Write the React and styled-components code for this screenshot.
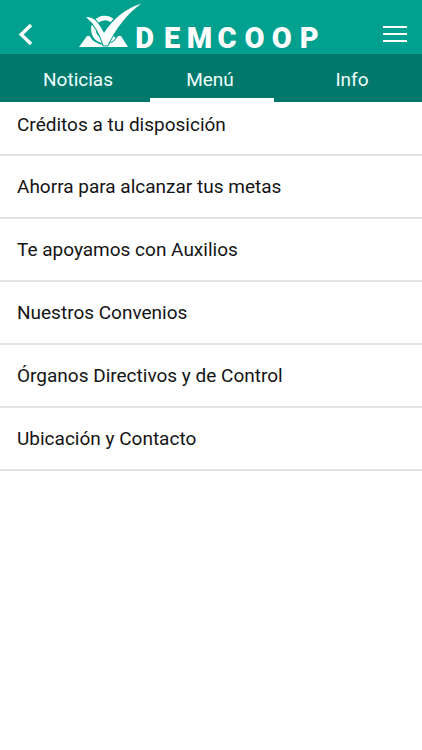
import React, { useState } from 'react';
import styled, { createGlobalStyle } from 'styled-components';

const GlobalStyle = createGlobalStyle`
  * {
    box-sizing: border-box;
  }

  body {
    margin: 0;
    background: #ffffff;
    font-family: Roboto, sans-serif;
    color: #141414;
  }
`;
const Header = styled.header`
  display: flex;
  align-items: center;
  justify-content: space-between;
  height: 54px;
  padding: 0 15px 0 18px;
  background: #02a08f;
`;
const IconButton = styled.button`
  display: flex;
  padding: 14px 0 0;
  border: 0;
  background: none;
  color: #ffffff;
  cursor: pointer;
`;
const Brand = styled.div`
  display: flex;
  align-items: flex-end;
  flex: 1;
  height: 48px;
  padding-left: 45px;
`;
const Wordmark = styled.div`
  display: grid;
  grid-template-columns: repeat(7, 1fr);
  width: 192px;
  margin-left: -11px;
  font-weight: 900;
  font-size: 29px;
  line-height: 26px;
  text-align: center;
  color: #ffffff;
`;
const Tabs = styled.nav`
  display: grid;
  grid-template-columns: 150fr 124fr 148fr;
  height: 48px;
  background: #01786c;
`;
const Tab = styled.button`
  padding: ${({ $pad }) => $pad};
  border: 0;
  border-bottom: 4px solid ${({ $active }) => ($active ? '#ffffff' : 'transparent')};
  background: none;
  font-family: inherit;
  font-size: 19px;
  line-height: 24px;
  color: #f0fffd;
  cursor: pointer;
`;
const List = styled.ul`
  margin: 0;
  padding: 0;
  list-style: none;
`;
const ItemLink = styled.a`
  display: block;
  padding: 19px 17px 18px;
  font-size: 19px;
  line-height: 24px;
  color: inherit;
  text-decoration: none;
`;
const Item = styled.li`
  border-bottom: 2px solid #e2e2e2;

  &:first-child ${ItemLink} {
    padding-top: 11px;
    padding-bottom: 17px;
  }
`;

const tabs = [
  { label: 'Noticias', pad: '8px 0 0 6px' },
  { label: 'Menú', pad: '8px 4px 0 0' },
  { label: 'Info', pad: '8px 0 0 8px' },
];

const items = [
  'Créditos a tu disposición',
  'Ahorra para alcanzar tus metas',
  'Te apoyamos con Auxilios',
  'Nuestros Convenios',
  'Órganos Directivos y de Control',
  'Ubicación y Contacto',
];

const BackIcon = () => (
  <svg width="16" height="24" viewBox="0 0 16 24" fill="none" stroke="currentColor" strokeWidth="3.4" aria-hidden="true">
    <path d="M13 3 L3.2 12.5 L13 22" />
  </svg>
);

const MenuIcon = () => (
  <svg width="24" height="18" viewBox="0 0 24 18" fill="currentColor" aria-hidden="true">
    <path d="M0 1h24v2H0zM0 8h24v2H0zM0 15h24v2H0z" />
  </svg>
);

const LogoMark = () => (
  <svg width="63" height="48" viewBox="0 1 63 48" aria-hidden="true">
    <path d="M0 45 L8 34 L10.5 34 Q15 42 25 43 Q35 42 39 34 L42 34 L49 45 Z" fill="#ffffff" />
    <path d="M33 18.5 A11.5 11.5 0 1 0 35 34.5" fill="none" stroke="#ffffff" strokeWidth="4.6" />
    <path
      d="M7 15 Q13 15 16.5 18.5 Q21 23 25 31 Q39 9 62.5 1.5 Q42 16 28.5 43.5 L24.5 43.5 Q19 25 7 15 Z"
      fill="#ffffff"
      stroke="#02a08f"
      strokeWidth="2"
      paintOrder="stroke"
    />
  </svg>
);

const App = () => {
  const [active, setActive] = useState('Menú');

  return (
    <>
      <GlobalStyle />
      <Header>
        <IconButton type="button" aria-label="Volver">
          <BackIcon />
        </IconButton>
        <Brand>
          <LogoMark />
          <Wordmark>
            {[...'DEMCOOP'].map((letter, i) => (
              <span key={i}>{letter}</span>
            ))}
          </Wordmark>
        </Brand>
        <IconButton type="button" aria-label="Abrir menú">
          <MenuIcon />
        </IconButton>
      </Header>
      <Tabs>
        {tabs.map(({ label, pad }) => (
          <Tab key={label} type="button" $pad={pad} $active={label === active} onClick={() => setActive(label)}>
            {label}
          </Tab>
        ))}
      </Tabs>
      <List>
        {items.map((item) => (
          <Item key={item}>
            <ItemLink href="#">{item}</ItemLink>
          </Item>
        ))}
      </List>
    </>
  );
};

export default App;
